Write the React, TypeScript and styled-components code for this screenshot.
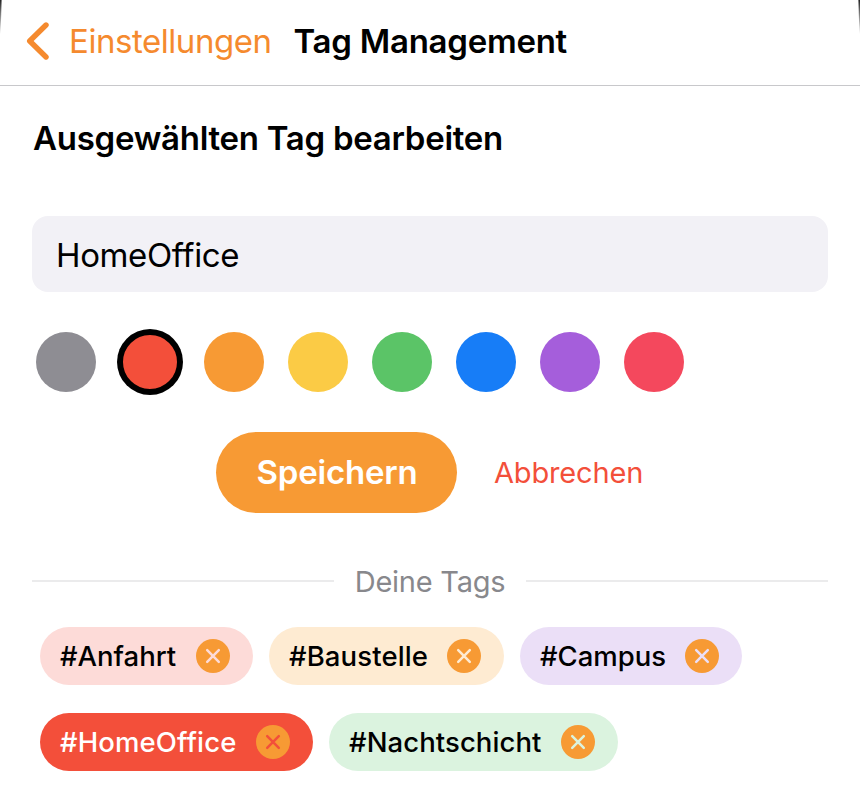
import React from "react";
import styled, { createGlobalStyle } from "styled-components";

const Global = createGlobalStyle`
  * { box-sizing: border-box; }
  body { margin: 0; background: #fff; font-family: Inter, sans-serif; color: #000; }
  button, input { font: inherit; color: inherit; border: 0; padding: 0; background: none; }
`;
const Page = styled.div`width: 860px; height: 796px; overflow: hidden; background: #fff;`;
const Header = styled.header`
  position: relative;
  height: 86px; border-bottom: 1px solid #c8c8cb; display: flex; align-items: center;
  padding: 0 0 3px 26px; white-space: nowrap;
  &::before, &::after {
    content: ""; position: absolute; top: 0; width: 2px; height: 34px;
    background: linear-gradient(#222, rgba(40, 40, 40, 0));
  }
  &::before { left: 0; clip-path: polygon(0 0, 80% 0, 30% 100%, 0 100%); }
  &::after { right: 0; clip-path: polygon(20% 0, 100% 0, 100% 100%, 70% 100%); }
`;
const Back = styled.button`
  display: flex; align-items: center; gap: 20px; color: #f58a2e; width: 267.5px;
  svg { flex: none; }
`;
const Txt = styled.span<{ $size: number; $weight?: number; $spacing?: number; $drop?: number }>`
  font-size: ${p => p.$size}px; font-weight: ${p => p.$weight ?? 400};
  letter-spacing: ${p => p.$spacing ?? 0}px; line-height: 1.2; white-space: nowrap;
  font-variant-ligatures: none; font-feature-settings: "calt" 0;
  padding-top: ${p => p.$drop ?? 0}px;
`;
const Heading = styled.h1`margin: 0; padding: 33px 0 0 33px; height: 130px; display: flex;`;
const Field = styled.input`
  display: block; width: 796px; height: 76px; margin: 0 32px; border-radius: 16px;
  && { background: #f2f1f6; padding: 2px 24px 0; font-size: 33px; letter-spacing: -0.38px; }
  font-variant-ligatures: none;
  outline: none;
`;
const Swatches = styled.div`display: flex; gap: 24px; padding: 40px 36px 0;`;
const Swatch = styled.button<{ $color: string; $selected: boolean }>`
  width: 60px; height: 60px; border-radius: 50%;
  && { background: ${p => p.$color}; }
  ${p => p.$selected && "border: 3px solid #000 !important; box-shadow: 0 0 0 3px #000;"}
`;
const Actions = styled.div`display: flex; align-items: center; padding: 40px 0 0 216px; gap: 37px;`;
const Save = styled.button`
  && { background: #f79a34; color: #fff; padding: 1px 0 0 1px; }
  width: 241px; height: 81px; border-radius: 40.5px;
`;
const Cancel = styled.button`&& { color: #f34f3a; padding-top: 2px; }`;
const Divider = styled.div`
  display: flex; align-items: center; gap: 21px; margin: 48px 32px 0; height: 40px; color: #88888c;
  &::before, &::after { content: ""; flex: 1; height: 2px; background: #ebebec; }
`;
const Tags = styled.div`display: flex; flex-wrap: wrap; gap: 28px 16px; padding: 26px 40px 0;`;
const Tag = styled.div<{ $bg: string; $w: number; $fg: string }>`
  width: ${p => p.$w}px; height: 58px; border-radius: 29px;
  background: ${p => p.$bg}; color: ${p => p.$fg};
  display: flex; align-items: center; justify-content: space-between; padding: 0 23px 0 20px;
`;
const Remove = styled.button<{ $mark: string }>`
  width: 34px; height: 34px; border-radius: 50%; display: grid; place-items: center;
  && { background: #f79a34; color: ${p => p.$mark}; }
`;
const colors = ["#8e8d93", "#f34f3a", "#f79a34", "#fbcb45", "#5bc467", "#177df7", "#a55edb", "#f4485d"];
const tags = [
  { name: "#Anfahrt", bg: "#fddbd8", w: 213, spacing: 0 },
  { name: "#Baustelle", bg: "#feebd2", w: 235, spacing: 0.12 },
  { name: "#Campus", bg: "#ebdff7", w: 222, spacing: 0 },
  { name: "#HomeOffice", bg: "#f34f3a", w: 273, selected: true, spacing: 0.12 },
  { name: "#Nachtschicht", bg: "#dbf3df", w: 289, spacing: 0.08 },
];

export default function App() {
  return (
    <Page>
      <Global />
      <Header>
        <Back>
          <svg width="23" height="38" viewBox="0 0 23 38" fill="none" stroke="currentColor" strokeWidth="5.4" strokeLinecap="round" strokeLinejoin="round"><path d="M20 3 3.7 19 20 35" /></svg>
          <Txt $size={33} $spacing={-0.45} $drop={2}>Einstellungen</Txt>
        </Back>
        <Txt $size={33} $weight={600} $spacing={-0.25} $drop={2}>Tag Management</Txt>
      </Header>
      <Heading><Txt $size={33} $weight={600} $spacing={-0.27}>Ausgewählten Tag bearbeiten</Txt></Heading>
      <Field defaultValue="HomeOffice" />
      <Swatches>{colors.map((c, i) => <Swatch key={c} $color={c} $selected={i === 1} />)}</Swatches>
      <Actions>
        <Save><Txt $size={33} $weight={600} $spacing={-0.2}>Speichern</Txt></Save>
        <Cancel><Txt $size={29} $spacing={-0.15}>Abbrechen</Txt></Cancel>
      </Actions>
      <Divider><Txt $size={29} $spacing={-0.25} $drop={2}>Deine Tags</Txt></Divider>
      <Tags>
        {tags.map(t => (
          <Tag key={t.name} $bg={t.bg} $w={t.w} $fg={t.selected ? "#fff" : "#000"}>
            <Txt $size={27.5} $weight={500} $spacing={t.spacing}>{t.name}</Txt>
            <Remove $mark={t.bg}>
              <svg width="16" height="16" viewBox="0 0 16 16" stroke="currentColor" strokeWidth="2.5" strokeLinecap="round"><path d="m2.2 2.2 11.6 11.6m0-11.6-11.6 11.6" /></svg>
            </Remove>
          </Tag>
        ))}
      </Tags>
    </Page>
  );
}
